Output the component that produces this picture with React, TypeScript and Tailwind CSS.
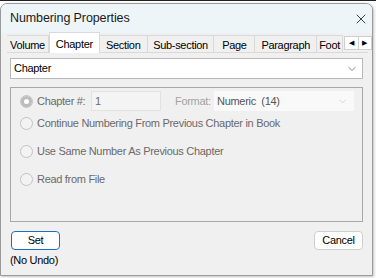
import { ChevronDown, X } from "lucide-react";

const tabs = [
  { label: "Volume", w: "w-[42px]" },
  { label: "Chapter", w: "w-[51px]" },
  { label: "Section", w: "w-[48px]" },
  { label: "Sub-section", w: "w-[67px]" },
  { label: "Page", w: "w-[41px]" },
  { label: "Paragraph", w: "w-[62px]" },
  { label: "Foot", w: "w-[26px]" },
];

const options = [
  "Continue Numbering From Previous Chapter in Book",
  "Use Same Number As Previous Chapter",
  "Read from File",
];

function Radio({ filled }: { filled?: boolean }) {
  return (
    <span className="flex h-[13px] w-[13px] shrink-0 items-center justify-center rounded-full border border-[#c2c2c2] bg-[#f3f3f3]">
      {filled && <span className="h-[5px] w-[5px] rounded-full bg-white ring-[3px] ring-[#bcbcbc]" />}
    </span>
  );
}

export default function App() {
  return (
    <div className="h-[278px] w-[376px] overflow-hidden bg-white font-['Liberation_Sans',sans-serif] text-[11px] tracking-[-0.3px]">
      <div className="h-[3px] border-t border-[#222]" />
      <div className="flex h-[273px] w-[373px] flex-col overflow-hidden rounded-t-[7px] border border-[#9a9a9a] bg-[#f0f0f0] shadow-[1px_1px_3px_rgba(0,0,0,0.25)]">
        {/* title bar */}
        <div className="flex h-[29px] shrink-0 items-center justify-between bg-[#eef5f8] pl-[9px] pr-[3px]">
          <span className="text-[12.5px] tracking-[-0.1px] text-[#1a1a1a]">Numbering Properties</span>
          <X className="h-[16px] w-[16px] text-[#222]" strokeWidth={1.3} />
        </div>

        {/* tab strip */}
        <div className="relative flex h-[20px] shrink-0 items-end pl-[6px]">
          <div className="absolute bottom-0 left-[6px] right-[4px] border-b border-[#d9d9d9]" />
          {tabs.map((t) => {
            const active = t.label === "Chapter";
            return (
              <div
                key={t.label}
                className={
                  active
                    ? `relative z-10 flex h-[21px] ${t.w} items-start justify-center border border-b-0 border-[#d9d9d9] bg-white pt-[3px] text-black`
                    : `flex h-[18px] ${t.w} items-center justify-center overflow-hidden border border-b-0 border-l-0 border-[#d9d9d9] bg-[#f0f0f0] pt-[1px] text-black first:border-l`
                }
              >
                <span className="whitespace-nowrap">{t.label}</span>
              </div>
            );
          })}
          <div className="mb-[3px] ml-[1px] flex h-[14px] w-[28px] border border-[#cfcfcf] bg-white">
            <span className="flex flex-1 items-center justify-center border-r border-[#cfcfcf] text-[7px] text-black">◀</span>
            <span className="flex flex-1 items-center justify-center text-[7px] text-black">▶</span>
          </div>
        </div>

        {/* body */}
        <div className="flex flex-1 flex-col px-[9px] pt-[5px]">
          <div className="flex h-[21px] items-center justify-between border border-[#b9b9b9] bg-white pl-[3px] pr-[4px] text-black">
            <span>Chapter</span>
            <ChevronDown className="h-[12px] w-[12px] text-[#444]" strokeWidth={1.3} />
          </div>

          <div className="mt-[8px] flex h-[135px] flex-col border border-[#a8a8a8] pl-[9px] pr-[8px] pt-[3px] text-[#6a6a6a]">
            <div className="flex h-[20px] items-center">
              <Radio filled />
              <span className="ml-[4px] w-[54px]">Chapter #:</span>
              <div className="flex h-[20px] w-[70px] items-center border border-[#e2e2e2] bg-[#f4f4f4] pl-[3px] text-[#6d6d6d]">1</div>
              <span className="ml-[14px] w-[39px] text-[#a3a3a3]">Format:</span>
              <div className="flex h-[20px] flex-1 items-center justify-between bg-[#f9f9f9] pl-[3px] pr-[6px] text-[#555]">
                <span className="whitespace-pre">Numeric  (14)</span>
                <ChevronDown className="h-[11px] w-[11px] text-[#bbb]" strokeWidth={1.2} />
              </div>
            </div>
            {options.map((o, i) => (
              <div key={o} className={`flex items-center ${i === 0 ? "mt-[5px]" : "mt-[13px]"} h-[15px]`}>
                <Radio />
                <span className="ml-[4px] whitespace-nowrap">{o}</span>
              </div>
            ))}
          </div>

          <div className="mt-[9px] flex items-start justify-between">
            <div className="flex flex-col items-start">
              <button className="ml-[1px] h-[19px] w-[49px] rounded-[4px] border border-[#1e6fc2] bg-white text-black">
                Set
              </button>
              <span className="mt-[2px] text-black">(No Undo)</span>
            </div>
            <button className="h-[19px] w-[49px] rounded-[4px] border border-[#cfcfcf] bg-white text-black">
              Cancel
            </button>
          </div>
        </div>
      </div>
    </div>
  );
}
